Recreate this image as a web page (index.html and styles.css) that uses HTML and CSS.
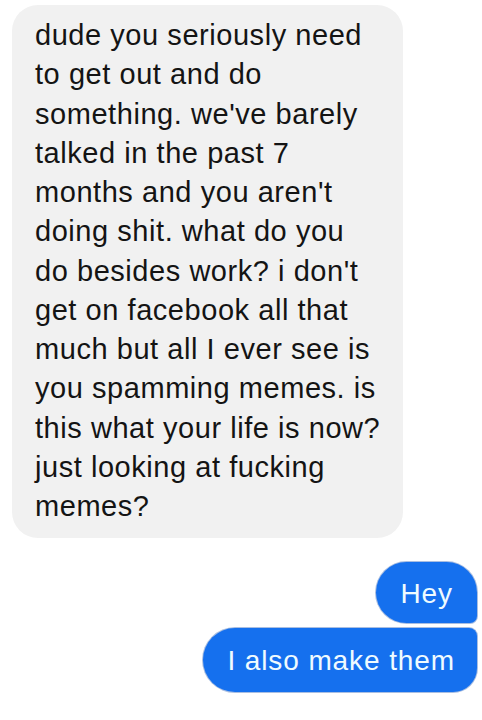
FILE: index.html
```html
<!DOCTYPE html>
<html>
<head>
<meta charset="utf-8">
<link rel="stylesheet" href="styles.css">
</head>
<body>
<div class="chat">
  <div class="bubble incoming">dude you seriously need<br>to get out and do<br>something. we've barely<br>talked in the past 7<br>months and you aren't<br>doing shit. what do you<br>do besides work? i don't<br>get on facebook all that<br>much but all I ever see is<br>you spamming memes. is<br>this what your life is now?<br>just looking at fucking<br>memes?</div>
  <div class="outgoing-group">
    <div class="bubble outgoing first">Hey</div>
    <div class="bubble outgoing last">I also make them</div>
  </div>
</div>
</body>
</html>
```
FILE: styles.css
```css
html, body {
  margin: 0;
  padding: 0;
  background: #ffffff;
}
.chat {
  width: 482px;
  height: 720px;
  padding: 5px 5px 0 12px;
  box-sizing: border-box;
  display: flex;
  flex-direction: column;
  font-family: "Liberation Sans", Arial, sans-serif;
}
.bubble {
  box-sizing: border-box;
}
.incoming {
  width: 391px;
  background: #f1f1f1;
  color: #141414;
  border-radius: 26px;
  font-size: 29px;
  letter-spacing: 0.55px;
  line-height: 39.25px;
  padding: 11px 8px 12px 23px;
  white-space: nowrap;
}
.outgoing-group {
  margin-top: 24px;
  display: flex;
  flex-direction: column;
  align-items: flex-end;
  gap: 5px;
}
.outgoing {
  background: #1570ee;
  color: #effbff;
  font-size: 28px;
  letter-spacing: 0.9px;
  line-height: 32px;
  white-space: nowrap;
  box-shadow: 0 0 0 1px rgba(10, 70, 170, 0.35);
}
.outgoing.first {
  padding: 16px 24px 13px 25px;
  border-radius: 31px 31px 7px 31px;
}
.outgoing.last {
  padding: 17px 22px 15px 24px;
  border-radius: 32px 8px 24px 32px;
}
```
